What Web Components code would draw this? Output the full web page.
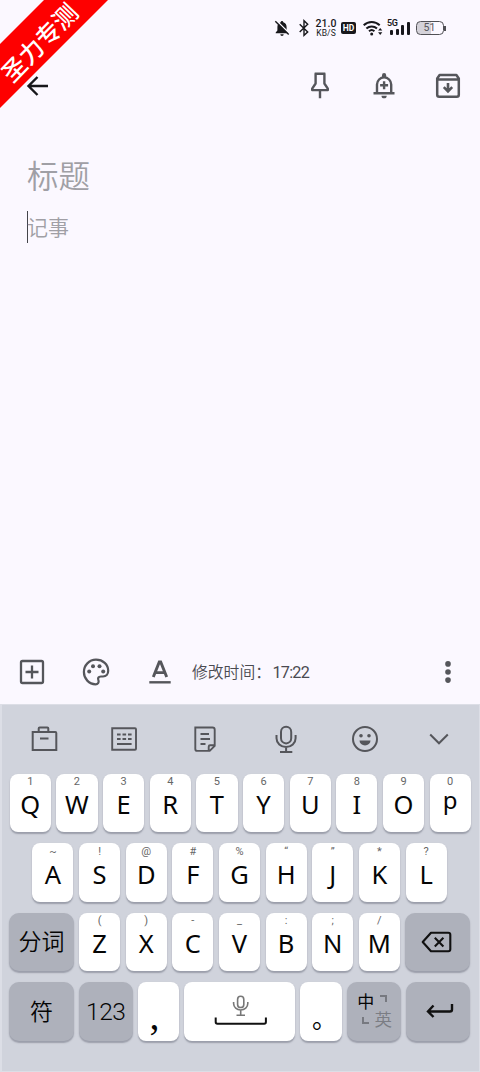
<!DOCTYPE html>
<html lang="zh-CN">
<head>
<meta charset="utf-8">
<title>记事</title>
<style>
html,body{margin:0;padding:0}
body{width:480px;height:1072px;overflow:hidden;background:#fbf8ff;font-family:"Noto Sans","Noto Sans CJK SC",sans-serif}
</style>
</head>
<body>
<note-app></note-app>
<script>
const define = (name, html) => customElements.define(name, class extends HTMLElement {
  constructor() {
    super();
    const t = document.createElement('template');
    t.innerHTML = html;
    this.attachShadow({mode: 'open'}).append(t.content.cloneNode(true));
  }
});

const ICONS = {
  back: [24, 24, '<path d="M22 12H3M11.5 3 2.5 12l9 9" stroke="#17171b" stroke-width="2.4"/>'],
  pin: [24, 30, '<path d="M6.7 2.700h10.6M7.6 2.700v9.800l-3.4 5.200v1.4h15.6v-1.4l-3.4-5.2V2.700zM12 19.100v8.200" stroke-width="2.4" stroke-linejoin="round"/>'],
  remind: [26, 30, '<path d="M2.500 22.300h21M6 22V13.500a7.100 7.100 0 0 1 14.200 0V22M13.100 10.200v8M9.100 14.200h8" stroke-width="2.400"/><path d="M11 6V4.200a2.100 2.100 0 0 1 4.200 0V6zM10.500 24.700h5.200a2.600 2.600 0 0 1-5.200 0z" fill="#55565b" stroke="none"/>'],
  archive: [26, 26, '<path d="M2.200 5.500 4.600 2h16.800l2.400 3.500v16.200q0 2-2 2H4.200q-2 0-2-2zM2.200 6.400h21.600" stroke-width="2.500" stroke-linejoin="round"/><path d="M13 10v8M8.800 14.200 13 18.400l4.200-4.200" stroke-width="2.600"/>'],
  add: [26, 26, '<rect x="2" y="2" width="22" height="22" rx="1.500" stroke-width="2.300"/><path d="M13 6.500v13M6.500 13h13" stroke-width="2.300"/>'],
  palette: [28, 28, '<path d="M14 1.700C7.100 1.700 1.900 7.400 1.900 14S7 26.300 13.600 26.300c2.300 0 3.500-1.800 2.900-3.600-.9-2.600-.3-4.200 2.400-4.200H21c3.400 0 5.200-2.700 5.200-5.700C26.200 6.500 21 1.700 14 1.700z" stroke-width="2.200"/><g fill="#55565b" stroke="none"><circle cx="7.200" cy="13.600" r="2"/><circle cx="11" cy="8.200" r="2"/><circle cx="17.500" cy="8.200" r="2"/><circle cx="21.200" cy="13.600" r="2"/></g>'],
  format: [24, 26, '<path d="M1.300 23.300h21.400" stroke-width="2.400"/><path d="M5.300 18 11.300 3h1.400l6 15M7.400 13.600h9.200" stroke-width="2.900"/>'],
  more: [8, 24, '<g fill="#55565b" stroke="none"><circle cx="4" cy="3.900" r="2.800"/><circle cx="4" cy="12" r="2.800"/><circle cx="4" cy="20.100" r="2.800"/></g>'],
  toolbox: [28, 28, '<path d="M2.700 7h22.600q1 0 1 1v17H2.700zM8.700 7V3.500q0-1 1-1h7.600q1 0 1 1V7M10 13.500h8.500" stroke-width="2"/>'],
  board: [28, 26, '<path d="M2.200 2.200H25q1 0 1 1v19.500q0 1-1 1H2.200zM7 8.500h3.600M12.500 8.500h3.600M18 8.500h3.600M7 13h3.600M12.500 13h3.600M18 13h3.600M7 18h14.600" stroke-width="1.900"/>'],
  memo: [24, 28, '<path d="M2.300 2.500h17.200q2.200 0 2.200 2.200v16.200l-5 5H4.300q-2 0-2-2zM21.700 20.300h-4.500q-1.500 0-1.500 1.500v4M7.500 9h8.500M7.500 14h9.500M7.500 19h5" stroke-width="1.900"/>'],
  mic: [24, 28, '<rect x="7" y="1.800" width="10.200" height="16.600" rx="5.100"/><path d="M2.500 10v3.200a9.500 8.800 0 0 0 19.100 0V10M12.100 22v4.300M6 27h12.300" stroke-width="2"/>'],
  smile: [28, 28, '<circle cx="14" cy="14" r="12" stroke-width="2"/><g fill="#55565b" stroke="none"><circle cx="10" cy="10.700" r="1.800"/><circle cx="18" cy="10.700" r="1.800"/><path d="M8.500 15.500h11a5.500 5 0 0 1-11 0z"/></g>'],
  down: [20, 14, '<path d="m1.200 2.500 8.800 8.800 8.800-8.800" stroke-width="2"/>'],
  erase: [32, 22, '<path d="M10 1.700h17.300q2 0 2 2v14.500q0 2-2 2H10L1.700 11zM13.800 6.800l8.600 8.600M22.400 6.800l-8.600 8.600" stroke="#111" stroke-width="2.100" stroke-linejoin="round"/>'],
  enter: [28, 16, '<path d="M26 1v5.500q0 2-2 2H2.500M7.500 2.500 2 8.500l5.500 5.500" stroke="#111" stroke-width="2.400"/>'],
  space: [54, 32, '<g stroke="#777" stroke-width="1.600"><rect x="23.600" y="1.300" width="6.200" height="11.200" rx="3.100"/><path d="M19.600 7v1.500a7.100 6.500 0 0 0 14.200 0V7M26.700 15.500v4.300M22.500 20.300h8.500"/></g><path d="M1.700 22.500v4.600q0 1.700 1.700 1.700h46.800q1.700 0 1.700-1.700V22.500" stroke="#111" stroke-width="2"/>'],
  belloff: [16, 18, '<path d="M8 2a1.300 1.300 0 0 1 1.300 1.200c2.300.6 3.300 2.700 3.300 4.800v3.400l1.700 2.100v.8H1.700v-.8l1.700-2.100V8c0-2.100 1-4.200 3.300-4.800A1.300 1.300 0 0 1 8 2zM6.300 15.200h3.400a1.700 1.700 0 0 1-3.400 0z" fill="#18181c" stroke="none"/><path d="M2.400 1.500 15.500 14.600" stroke="#fbf8ff" stroke-width="1.500"/><path d="M1.300 2.200 14.700 15.600" stroke="#18181c" stroke-width="1.400"/>'],
  bluetooth: [12, 18, '<path d="m1.700 5.200 8 7.700L6 16.300V1.700l3.700 3.500-8 7.700" stroke="#18181c" stroke-width="1.400"/>'],
  wifi: [22, 18, '<g stroke="#18181c" stroke-width="2"><path d="M1.700 6.300a11.500 11.500 0 0 1 16 0M4.400 9.500a7.700 7.700 0 0 1 10.600 0M7 12.300a4 4 0 0 1 5.400 0"/></g><circle cx="9.700" cy="14.900" r="1.500" fill="#18181c" stroke="none"/><path d="m16.100 11.500 2.100-2.600 2.100 2.600zM16.100 13.300l2.100 2.600 2.100-2.600z" fill="#18181c" stroke="none"/>']
};
customElements.define('ui-icon', class extends HTMLElement {
  connectedCallback() {
    const [w, h, body] = ICONS[this.getAttribute('name')];
    this.attachShadow({mode: 'open'}).innerHTML = `<style>:host{display:block;width:${w}px;height:${h}px;flex:none}svg{display:block}</style><svg width="${w}" height="${h}" viewBox="0 0 ${w} ${h}" fill="none" stroke="#55565b" stroke-width="2">${body}</svg>`;
  }
});

define('corner-ribbon', `<style>
:host{position:absolute;left:0;top:0;width:120px;height:120px;z-index:2}
.band{width:108px;height:108px;background:#fe0000;clip-path:polygon(44px 0,108px 0,0 108px,0 44px)}
.text{position:absolute;left:-11px;top:29px;width:100px;height:26px;color:#fff;transform:rotate(-46deg);text-align:center;font:450 24.300px/26px "Noto Sans CJK SC",sans-serif;white-space:nowrap}
</style><div class="band"></div><div class="text"><slot></slot></div>`);

define('status-bar', `<style>
:host{display:flex;height:56px;box-sizing:border-box;padding-left:274px;align-items:center;color:#18181c}
.speed{width:24px;margin:0 3px 0 4px;text-align:center;font:500 10.500px/11px Roboto,sans-serif}
.speed small{display:block;font:400 8.500px/9px Roboto,sans-serif;letter-spacing:.1px}
.hd{width:15px;height:12.500px;border-radius:2px;background:#18181c;color:#fff;font:700 8.500px/13px Roboto,sans-serif;text-align:center}
.signal{width:23px;height:18px;margin-left:3px;position:relative;display:flex;align-items:flex-end;gap:2.500px;padding-left:3px;box-sizing:border-box}
.signal i{width:3px;background:#18181c;border-radius:1px;margin-bottom:2.500px}
.signal span{position:absolute;left:0;top:0;font:600 9px/9px Roboto,sans-serif;letter-spacing:-.5px}
.battery{box-sizing:border-box;width:28px;height:14px;border:1.500px solid #505055;border-radius:4.500px;margin-left:5.500px;font:400 10.500px/11.500px Roboto,sans-serif;color:#55555b;text-align:center;background:linear-gradient(90deg,#d4d2d9 52%,transparent 52%)}
.tip{width:1.500px;height:5px;background:#505055;margin-left:.5px}
</style><ui-icon name="belloff"></ui-icon><ui-icon name="bluetooth" style="margin-left:8px"></ui-icon><div class="speed">21.0<small>KB/S</small></div><div class="hd">HD</div><ui-icon name="wifi" style="margin-left:6px"></ui-icon><div class="signal"><span>5G</span><i style="height:5px"></i><i style="height:6px"></i><i style="height:10px"></i><i style="height:13px"></i></div><div class="battery">51</div><div class="tip"></div>`);

define('top-bar', `<style>
:host{display:flex;height:60px;align-items:center;padding:0 19px 0 26px}
.gap{flex:1}
</style><ui-icon name="back"></ui-icon><div class="gap"></div><ui-icon name="pin"></ui-icon><ui-icon name="remind" style="margin-left:39px"></ui-icon><ui-icon name="archive" style="margin-left:38px"></ui-icon>`);

define('note-editor', `<style>
:host{display:block;height:524px;box-sizing:border-box;padding:34px 27px 0;color:#a09fa5;font-family:"Noto Sans CJK SC",sans-serif}
h1{font-weight:350;font-size:31.500px;line-height:48px;margin:0}
p{margin:13px 0 0;font-size:21px;line-height:30px;height:32px;box-shadow:inset 1px 0 #44444a;font-weight:350}
</style><h1>标题</h1><p>记事</p>`);

define('bottom-bar', `<style>
:host{display:flex;height:64px;align-items:center;padding:0 28px 0 19px;color:#4a4a51}
.time{font:350 15.800px/24px "Noto Sans CJK SC",sans-serif;margin-left:20px;flex:1;white-space:nowrap}
.time span{font-family:Roboto,sans-serif;font-weight:400;font-size:16.200px;letter-spacing:-.75px;margin-left:1.500px}
</style><ui-icon name="add"></ui-icon><ui-icon name="palette" style="margin-left:37px"></ui-icon><ui-icon name="format" style="margin-left:38px"></ui-icon><div class="time">修改时间：<span>17:22</span></div><ui-icon name="more"></ui-icon>`);

define('soft-key', `<style>
:host{display:flex;flex-direction:column;align-items:center;box-sizing:border-box;width:41.200px;height:58.500px;border-radius:8px;background:#fff;box-shadow:0 1.500px 1.500px #9b9eaa;color:#050505;flex:none;font:400 25.500px/32px "Noto Sans",sans-serif}
:host([wide]),:host([mid]){background:#aeb1bb;border-radius:10px;justify-content:center;font:350 23px/32px "Noto Sans CJK SC",sans-serif}
:host([wide]){width:64.300px}
:host([mid]){width:53.700px}
:host([space]){width:110.700px;padding-top:13px}
:host([mark]){justify-content:flex-end;font-family:"Noto Sans CJK SC",sans-serif}
::slotted(small){display:block;height:14px;padding-top:1.500px;margin-bottom:-1px;font:400 11px/14px Roboto,sans-serif;color:#666}
</style><slot name="hint"></slot><slot></slot>`);

define('lang-key', `<style>
:host{display:grid;grid-template-columns:17px 18px;grid-template-rows:20px 19px;width:35px;height:40px;font-family:"Noto Sans CJK SC",sans-serif;align-items:center;justify-items:center;margin:-1px 0 0 2px}
b{font:400 17px/20px "Noto Sans CJK SC",sans-serif}
span{font-size:17.500px;line-height:19px;color:#7b7d84;margin-top:-3px}
i{width:5px;height:5px;border:solid #777980;border-width:2.500px 2.500px 0 0;margin-top:-5px}
i.l{border-width:0 0 2.500px 2.500px;margin-top:0}
</style><b>中</b><i></i><i class="l"></i><span>英</span>`);

customElements.define('soft-keyboard', class extends HTMLElement {
  connectedCallback() {
    const key = (c, h) => `<soft-key><small slot="hint">${h}</small><span class="${c === 'p' ? 'p' : ''}">${c}</span></soft-key>`;
    const row = (s, h) => [...s].map((c, i) => key(c, h[i])).join('');
    this.attachShadow({mode: 'open'}).innerHTML = `<style>
:host{display:block;height:368px;box-sizing:border-box;background:#d0d3dc;border:solid #dcdee6;border-width:1px 1px 1px 2px}
.tools{display:flex;align-items:center;height:68.500px;padding-left:28px}
.row{display:flex;gap:5.480px;height:58.500px;margin-bottom:11px;padding-left:7.700px}
.second{padding-left:30.300px}
.third{padding-left:7.300px;gap:5.450px}
.fourth{padding-left:7.300px;gap:5.300px}
.p{margin-top:-4px;font-size:24px}
.cn{margin-top:-3px}
.num{font-family:Roboto,sans-serif;font-size:24.500px;font-weight:350;letter-spacing:-.4px;margin-top:2px}
.comma{font:400 40px/24px "Liberation Serif",serif;margin:0 0 13px -8px}
.stop{font:400 25px/24px "Noto Sans CJK SC",sans-serif;margin:0 0 12px 7px}
</style><div class="tools"><ui-icon name="toolbox"></ui-icon><ui-icon name="board" style="margin-left:52px"></ui-icon><ui-icon name="memo" style="margin-left:54.500px"></ui-icon><ui-icon name="mic" style="margin-left:57px"></ui-icon><ui-icon name="smile" style="margin-left:53.500px"></ui-icon><ui-icon name="down" style="margin-left:50px"></ui-icon></div>
<div class="row">${row('QWERTYUIOp', '1234567890')}</div>
<div class="row second">${row('ASDFGHJKL', '~!@#%“”*?')}</div>
<div class="row third"><soft-key wide><span class="cn">分词</span></soft-key>${row('ZXCVBNM', '()-_:;/')}<soft-key wide><ui-icon name="erase" style="margin-right:2px"></ui-icon></soft-key></div>
<div class="row fourth"><soft-key wide><span class="cn">符</span></soft-key><soft-key mid><span class="num">123</span></soft-key><soft-key mark><span class="comma">,</span></soft-key><soft-key space><ui-icon name="space" style="margin-left:2px"></ui-icon></soft-key><soft-key mark><span class="stop">。</span></soft-key><soft-key mid><lang-key></lang-key></soft-key><soft-key wide><ui-icon name="enter" style="margin-left:4px"></ui-icon></soft-key></div>`;
  }
});

define('note-app', `<style>
:host{display:flex;flex-direction:column;position:relative;width:480px;height:1072px;overflow:hidden;background:#fbf8ff}
:host>*{flex:none}
</style><corner-ribbon>圣力专测</corner-ribbon><status-bar></status-bar><top-bar></top-bar><note-editor></note-editor><bottom-bar></bottom-bar><soft-keyboard></soft-keyboard>`);
</script>
</body>
</html>
